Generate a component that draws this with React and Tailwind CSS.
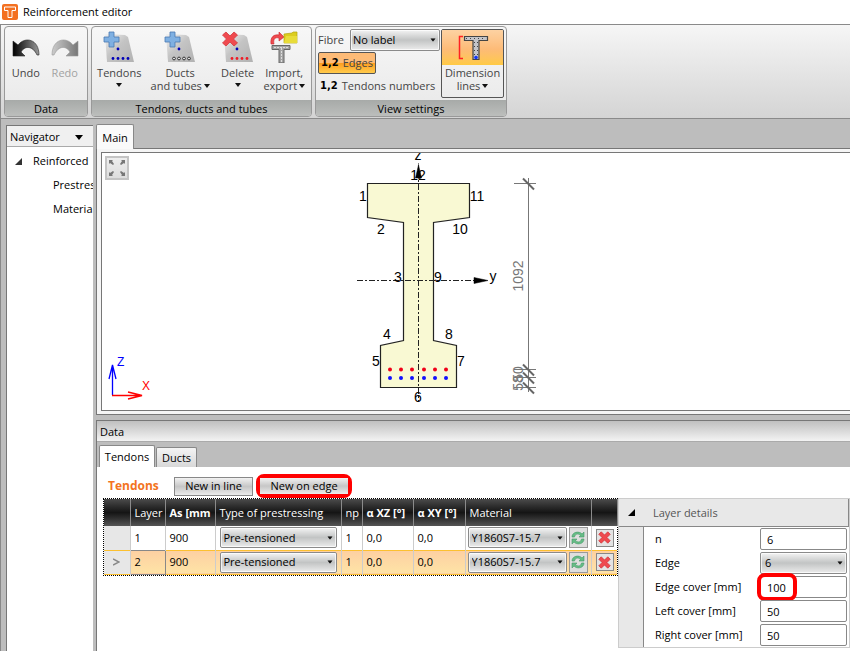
import React, { useState } from 'react';

const tendons = [
    { layer: 1, area: '900', type: 'Pre-tensioned', np: '1', xz: '0,0', xy: '0,0', material: 'Y1860S7-15.7' },
    { layer: 2, area: '900', type: 'Pre-tensioned', np: '1', xz: '0,0', xy: '0,0', material: 'Y1860S7-15.7' },
];

const edgeLabels = [
    { text: '12', x: 418, y: 180 },
    { text: '1', x: 363, y: 201 },
    { text: '11', x: 477, y: 201 },
    { text: '2', x: 381, y: 234 },
    { text: '10', x: 460, y: 234 },
    { text: '3', x: 398, y: 282 },
    { text: '9', x: 438, y: 282 },
    { text: '4', x: 387, y: 339 },
    { text: '8', x: 449, y: 339 },
    { text: '5', x: 376, y: 366 },
    { text: '7', x: 461, y: 366 },
    { text: '6', x: 418, y: 402 },
];

const strandX = [390, 401, 412, 424, 435, 446];

const Caret = ({ className = '' }) => (
    <svg className={className} width="6" height="4" viewBox="0 0 6 4" aria-hidden="true">
        <path d="M0 0h6L3 4z" fill="#111" />
    </svg>
);

const Select = ({ label, id, options, className = '', padding = 'px-1' }) => (
    <div className={`relative ${className}`}>
        <select
            id={id}
            aria-label={label}
            className={`block h-full w-full appearance-none rounded-xs border border-[#8a8a8a] bg-linear-to-b from-[#f4f4f4] from-0% via-[#c2c4c4] via-50% to-[#ececec] text-black outline-1 -outline-offset-2 outline-white/70 ${padding}`}
        >
            {options.map(option => <option key={option}>{option}</option>)}
        </select>
        <Caret className="pointer-events-none absolute right-1 top-1/2 -mt-0.5 scale-90" />
    </div>
);

const UndoIcon = ({ redo }) => (
    <svg width="28" height="32" viewBox="0 0 28 32" className={redo ? '-scale-x-100' : ''} aria-hidden="true">
        <defs>
            <linearGradient id={redo ? 'redo' : 'undo'} x1="0" x2="1">
                <stop offset="0" stopColor={redo ? '#777' : '#000'} />
                <stop offset="1" stopColor={redo ? '#ccc' : '#999'} />
            </linearGradient>
        </defs>
        <path
            d="M1 10v15h12l-4-4c4-7 12-6 16 3h2C27 8 13 5 6 14z"
            fill={`url(#${redo ? 'redo' : 'undo'})`}
            stroke={redo ? '#999' : '#222'}
            strokeWidth=".6"
        />
    </svg>
);

const RedCross = ({ size = 16 }) => (
    <svg width={size} height={size} viewBox="0 0 16 16" aria-hidden="true">
        <path
            d="M4 1l4 4 4-4 3 3-4 4 4 4-3 3-4-4-4 4-3-3 4-4-4-4z"
            fill="#ef4a4f"
            stroke="#d4383e"
            strokeWidth="1"
            strokeLinejoin="round"
        />
    </svg>
);

const PlateIcon = ({ kind }) => (
    <svg width="32" height="32" viewBox="0 0 32 32" aria-hidden="true">
        <defs>
            <linearGradient id="plate" x1="0" y1="0" x2="1" y2="1">
                <stop offset="0" stopColor="#f2f2f2" />
                <stop offset=".45" stopColor="#c4c4c4" />
                <stop offset="1" stopColor="#b2b2b2" />
            </linearGradient>
        </defs>
        <path d="M2 3l20 1 3 2 6 25H4z" fill="url(#plate)" />
        <circle cx="15" cy="18" r="1.4" fill="#0000b8" />
        {[10, 15, 20, 25].map(x => (
            <circle
                key={x}
                cx={x}
                cy="27.500"
                r="1.4"
                fill={kind === 'tendon' ? '#0000b8' : kind === 'delete' ? '#ee1c25' : '#eee'}
                stroke={kind === 'duct' ? '#222' : 'none'}
                strokeWidth=".9"
            />
        ))}
        {kind === 'delete' ? (
            <path
                d="M4 1l4 4 4-4 3.500 3-4 4 4 4-3.500 3-4-4-4 4-3.500-3 4-4-4-4z"
                fill="#ef4a4f"
                stroke="#d4383e"
                strokeWidth=".8"
                strokeLinejoin="round"
            />
        ) : (
            <path d="M6 1h5v5h5v5h-5v5H6v-5H1V6h5z" fill="#7fb0e2" stroke="#4a7ab2" strokeWidth=".8" />
        )}
    </svg>
);

const ImportIcon = () => (
    <svg width="28" height="32" viewBox="0 0 28 32" aria-hidden="true">
        <path d="M2 14.500h18v4h-6V32H9V18.500H2z" fill="#a4a4a4" stroke="#666" />
        <path d="M11.500 17v15M4 16.500h14" stroke="#ddd" strokeDasharray="2 1" />
        <path d="M1 13C0 6 4 3 9 4V1l5 5-5 4V7c-4-1-6 1-5 6z" fill="#ef4a4f" stroke="#c9252c" strokeWidth=".6" />
        <path d="M14 3l8-1 1-1h4v11H14z" fill="#dccd20" stroke="#b5a60d" strokeWidth=".7" />
        <path d="M14 12l2-7h11v7z" fill="#e8dc39" />
    </svg>
);

const DimensionIcon = () => (
    <svg width="32" height="26" viewBox="0 0 32 26" aria-hidden="true">
        <path d="M6 1.500H2.500v22H6" fill="none" stroke="#f22" strokeWidth="1.500" />
        <path d="M7.500 1.500h23v4h-8.500v19h-6v-19H7.500z" fill="#c4c4c8" stroke="#444" strokeWidth="1.200" />
        <path d="M9 3.500h20M17.500 7v13M20.500 7v13" stroke="#444" strokeDasharray="1 3" />
        <circle cx="19" cy="22.500" r="1.800" fill="#1237ff" />
    </svg>
);

const RefreshIcon = () => (
    <svg width="14" height="14" viewBox="0 0 14 14" aria-hidden="true">
        <path
            d="M1 6C1 1 8-.5 11 3l2-2v5H8l1.500-1.500C7 2 4 3 3.500 6zM13 8c0 5-7 6.500-10 3l-2 2V8h5L4.500 9.500C7 12 10 11 10.500 8z"
            fill="#66bd86"
            stroke="#48996a"
            strokeWidth=".6"
        />
    </svg>
);

const RibbonGroup = ({ title, className, children }) => (
    <section className={`flex flex-col overflow-hidden rounded-sm border border-[#999] bg-linear-to-b from-[#f7f7f7] to-[#e8e8e8] ${className}`}>
        <div className="flex h-[73px] px-0.5 pt-0.5">{children}</div>
        <h2 className="h-4 bg-linear-to-b from-[#a7aaa8] to-[#bcbebc] text-center leading-[18px] text-black">{title}</h2>
    </section>
);

const RibbonButton = ({ icon, lines, caret, disabled, className }) => (
    <button
        type="button"
        disabled={disabled}
        className={`flex flex-col items-center pt-0.5 leading-[13px] disabled:text-[#a2a2a2] ${className}`}
    >
        {icon}
        <span className="mt-[3px] whitespace-nowrap">{lines[0]}</span>
        {caret && (
            <span className="flex items-center gap-0.5 whitespace-nowrap">
                {lines[1]}
                <Caret className={lines[1] ? '' : 'mt-1'} />
            </span>
        )}
    </button>
);

const Ribbon = () => (
    <div className="flex h-[95px] shrink-0 gap-[3px] overflow-hidden border-y border-l border-[#8a8a8a] bg-linear-to-b from-[#f6f6f6] to-[#d4d4d4] px-[3px] py-px text-[#444]">
        <RibbonGroup title="Data" className="w-[84px]">
            <RibbonButton icon={<UndoIcon />} lines={['Undo']} className="w-[39px]" />
            <RibbonButton icon={<UndoIcon redo />} lines={['Redo']} className="w-[42px]" disabled />
        </RibbonGroup>
        <RibbonGroup title="Tendons, ducts and tubes" className="w-[221px]">
            <RibbonButton icon={<PlateIcon kind="tendon" />} lines={['Tendons']} className="w-[51px]" caret />
            <RibbonButton icon={<PlateIcon kind="duct" />} lines={['Ducts', 'and tubes']} className="w-[72px]" caret />
            <RibbonButton icon={<PlateIcon kind="delete" />} lines={['Delete']} className="w-[44px]" caret />
            <RibbonButton icon={<ImportIcon />} lines={['Import,', 'export']} className="w-[50px]" caret />
        </RibbonGroup>
        <RibbonGroup title="View settings" className="w-[192px]">
            <div className="flex w-[122px] flex-col items-start">
                <div className="flex h-[22px] w-full items-center justify-between">
                    <label htmlFor="fibre">Fibre</label>
                    <Select id="fibre" options={['No label']} className="h-[22px] w-[90px]" padding="pl-0.5" />
                </div>
                <button
                    type="button"
                    aria-pressed="true"
                    className="mt-px flex h-[22px] items-center gap-1 rounded-xs border border-[#555] bg-linear-to-b from-[#fdbb77] from-50% via-[#ff9c1c] via-50% to-[#ffcb4b] px-0.5"
                >
                    <b className="font-['DejaVu_Sans'] text-[10px] text-black">1,2</b>
                    Edges
                </button>
                <button type="button" className="flex h-[23px] items-center gap-1 whitespace-nowrap px-0.5">
                    <b className="font-['DejaVu_Sans'] text-[10px] text-black">1,2</b>
                    Tendons numbers
                </button>
            </div>
            <button
                type="button"
                aria-pressed="true"
                className="ml-auto flex h-[69px] w-[63px] flex-col items-center overflow-hidden rounded-xs border border-[#555] leading-[13px]"
            >
                <span className="flex h-[35px] w-full items-center justify-center bg-linear-to-b from-[#fdd2a2] from-0% via-[#fdbb77] via-55% to-[#ffca43]">
                    <DimensionIcon />
                </span>
                <span className="mt-px">Dimension</span>
                <span className="flex items-center gap-0.5">lines<Caret /></span>
            </button>
        </RibbonGroup>
    </div>
);

const Navigator = () => (
    <nav className="mt-1.5 flex w-[87px] shrink-0 flex-col overflow-hidden border-l border-t border-[#777] bg-white">
        <button type="button" className="flex h-[21px] shrink-0 items-center justify-between border-b border-[#aaa] bg-[#f0f0f0] pl-[3px] pr-2.5 pt-0.5">
            Navigator
            <svg width="8" height="5" viewBox="0 0 8 5" aria-hidden="true"><path d="M0 0h8L4 5z" /></svg>
        </button>
        <ul className="whitespace-nowrap pt-0.5 leading-6">
            <li>
                <span className="flex items-center gap-[11px] pl-2">
                    <svg width="7" height="7" viewBox="0 0 7 7" aria-hidden="true"><path d="M7 0v7H0z" fill="#333" /></svg>
                    Reinforced
                </span>
                <ul className="pl-[46px]">
                    <li>Prestressing</li>
                    <li>Materials</li>
                </ul>
            </li>
        </ul>
    </nav>
);

const DimensionTick = ({ y }) => (
    <g stroke="#777">
        <path d={`M514 ${y}h22`} />
        <path d={`M523 ${y - 5}l11 11`} stroke="#666" strokeWidth="2" />
    </g>
);

// Girder cross-section with its edges, strands, axes and dimension chain
const SectionDrawing = () => (
    <svg className="block h-[257px] w-full font-['Liberation_Sans'] text-sm" role="img" aria-label="Cross-section">
        <g transform="translate(-102 -153)">
            <path
                d="M367.500 183.500h102v34l-36 5v118l23 5v42h-76v-42l23-5v-118l-36-5z"
                fill="#f9f9d3"
                stroke="#222"
                strokeWidth="1.200"
            />
            <g stroke="#222" strokeDasharray="6 2 2 2" fill="none">
                <path d="M418.500 172v229" />
                <path d="M357 280.500h118" />
            </g>
            <path d="M418.500 163v16M418.500 165l3 13h-6zM488 280.500l-14-3v6z" fill="#000" stroke="#000" strokeWidth=".5" />
            {strandX.map(x => (
                <g key={x}>
                    <circle cx={x} cy="369.500" r="2" fill="#f00018" />
                    <circle cx={x} cy="378" r="2" fill="#1010ff" />
                </g>
            ))}
            <g textAnchor="middle">
                <text x="418" y="160">z</text>
                <text x="493" y="281">y</text>
                {edgeLabels.map(label => (
                    <text key={label.text} x={label.x} y={label.y}>{label.text}</text>
                ))}
            </g>
            <path d="M528.500 178v214" stroke="#777" />
            <DimensionTick y={183.5} />
            <DimensionTick y={369.5} />
            <DimensionTick y={377.5} />
            <DimensionTick y={387.5} />
            <g fill="#777" textAnchor="middle">
                <text transform="translate(523 276) rotate(-90)">1092</text>
                <text transform="translate(523 374) rotate(-90)">50</text>
                <text transform="translate(523 383) rotate(-90)">58</text>
            </g>
            <g fill="none" stroke="#00f" strokeWidth="1.300">
                <path d="M112.500 395v-30M109 379l3.500-14 3.500 14" />
            </g>
            <g fill="none" stroke="#f00" strokeWidth="1.300">
                <path d="M112 395.500h30M128 392l14 3.500-14 3.500" />
            </g>
            <text x="117" y="366" fill="#00f" className="text-xs">Z</text>
            <text x="142" y="390" fill="#f00" className="text-xs">X</text>
        </g>
    </svg>
);

const MainView = () => (
    <div className="shrink-0">
        <div role="tablist" className="flex h-6">
            <button type="button" role="tab" aria-selected="true" className="relative z-10 -mb-px w-[38px] rounded-t-xs border border-b-0 border-[#888] bg-[#fafafa] pt-0.5">
                Main
            </button>
        </div>
        <div className="border-y border-l border-[#777] bg-[#f5f5f5] py-[3px] pl-1">
            <div className="relative border-y border-l border-[#777] bg-white">
                <SectionDrawing />
                <button type="button" aria-label="Zoom all" className="absolute left-[3px] top-[3px] flex h-6 w-6 items-center justify-center border-2 border-[#c4c4c4] bg-linear-to-b from-[#eee] to-[#ddd]">
                    <svg width="16" height="16" viewBox="0 0 16 16" aria-hidden="true">
                        <path d="M0 0h4L3 1l2 3-1 1-3-2-1 1zM16 0v4l-1-1-3 2-1-1 2-3-1-1zM0 16v-4l1 1 3-2 1 1-2 3 1 1zM16 16h-4l1-1-2-3 1-1 3 2 1-1z" fill="#777" />
                    </svg>
                </button>
            </div>
        </div>
    </div>
);

const headerCell = 'h-[27px] overflow-hidden whitespace-nowrap border-r border-[#8b8b8b] px-1 text-left font-normal';

const TendonTable = () => {
    const [selected, setSelected] = useState(2);

    return (
        <div className="w-[515px] shrink-0 border border-dotted border-black">
            <table className="w-full table-fixed border-collapse">
                <colgroup>
                    <col className="w-[26px]" />
                    <col className="w-[35px]" />
                    <col className="w-[50px]" />
                    <col className="w-[126px]" />
                    <col className="w-[21px]" />
                    <col className="w-[51px]" />
                    <col className="w-[52px]" />
                    <col className="w-[126px]" />
                    <col className="w-[26px]" />
                </colgroup>
                <thead className="bg-linear-to-b from-[#4c4c4c] from-0% via-[#151515] via-50% to-[#555] text-white">
                    <tr>
                        <th className={headerCell} />
                        <th className={headerCell}>Layer</th>
                        <th className={headerCell}><b>As [mm</b></th>
                        <th className={headerCell}>Type of prestressing</th>
                        <th className={headerCell}>np</th>
                        <th className={headerCell}><b>α XZ [°]</b></th>
                        <th className={headerCell}><b>α XY [°]</b></th>
                        <th className={headerCell}>Material</th>
                        <th className={headerCell} />
                    </tr>
                </thead>
                <tbody>
                    {tendons.map(row => {
                        const active = row.layer === selected;
                        return (
                            <tr
                                key={row.layer}
                                onClick={() => setSelected(row.layer)}
                                className={active ? 'h-6 border-y border-[#fcc030] bg-linear-to-b from-[#fdd0a2] to-[#fee3a6]' : 'h-6'}
                            >
                                <td className="border-r border-[#ccc] bg-[#e7e7e7]">
                                    {active && (
                                        <svg className="mx-auto" width="7" height="8" viewBox="0 0 7 8" aria-hidden="true">
                                            <path d="M0 1l6 3-6 3" fill="none" stroke="#888" strokeWidth="1.500" />
                                        </svg>
                                    )}
                                </td>
                                <td className={active ? 'border border-[#888] px-1' : 'border-r border-[#ccc] px-1'}>{row.layer}</td>
                                <td className="border-r border-[#ccc] px-1">{row.area}</td>
                                <td className="border-r border-[#ccc] px-1">
                                    <Select label="Type of prestressing" options={[row.type]} className="h-[21px]" padding="pl-[3px]" />
                                </td>
                                <td className="border-r border-[#ccc] px-1">{row.np}</td>
                                <td className="border-r border-[#ccc] px-1">{row.xz}</td>
                                <td className="border-r border-[#ccc] px-1">{row.xy}</td>
                                <td className="border-r border-[#ccc] pl-0.5">
                                    <div className="flex gap-0.5">
                                        <Select label="Material" options={[row.material]} className="h-[21px] w-[99px]" padding="pl-[3px]" />
                                        <button type="button" aria-label="Change material" className="flex h-[21px] w-[19px] items-center justify-center border border-[#999] bg-[#dedede]">
                                            <RefreshIcon />
                                        </button>
                                    </div>
                                </td>
                                <td className="px-1">
                                    <button type="button" aria-label="Delete layer" className="flex h-[18px] w-[18px] items-center justify-center border border-[#888] bg-[#e4e4e4]">
                                        <RedCross size={13} />
                                    </button>
                                </td>
                            </tr>
                        );
                    })}
                </tbody>
            </table>
        </div>
    );
};

const details = [
    { id: 'count', label: 'n', value: '6' },
    { id: 'edge', label: 'Edge', value: '6', select: true },
    { id: 'edge-cover', label: 'Edge cover [mm]', value: '100', marked: true },
    { id: 'left-cover', label: 'Left cover [mm]', value: '50' },
    { id: 'right-cover', label: 'Right cover [mm]', value: '50' },
];

const LayerDetails = () => (
    <section className="min-w-0 flex-1 self-start border border-[#ccc] bg-[#e8e8e8]">
        <h3 className="flex h-7 items-center gap-[18px] border-b border-r border-[#888] pl-[9px] text-[#555]">
            <svg width="7" height="7" viewBox="0 0 7 7" aria-hidden="true"><path d="M7 0v7H0z" fill="#000" /></svg>
            Layer details
        </h3>
        <div className="ml-6 border-l border-[#888] bg-white">
            {details.map(row => (
                <div key={row.id} className="flex h-6 items-center justify-between pl-[11px] pr-0.5">
                    <label htmlFor={row.id} className="whitespace-nowrap">{row.label}</label>
                    <div className="relative">
                        {row.select
                            ? <Select id={row.id} options={[row.value]} className="h-[22px] w-[87px]" />
                            : <input id={row.id} defaultValue={row.value} className="block h-[22px] w-[87px] rounded-xs border border-[#888] px-1.5" />}
                        {row.marked && <span className="pointer-events-none absolute -left-[3px] -top-[3px] h-7 w-10 rounded-lg border-4 border-[#f00]" />}
                    </div>
                </div>
            ))}
        </div>
    </section>
);

const plainButton = 'bg-linear-to-b from-[#f2f2f2] from-0% via-[#c6c6c6] via-50% to-[#ececec] whitespace-nowrap';

const DataPanel = () => (
    <section className="mt-[5px] flex flex-1 flex-col border-l border-t border-[#777]">
        <h2 className="h-[21px] shrink-0 border-b border-[#aaa] bg-linear-to-b from-[#c0c0c0] to-[#f3f3f3] pl-[3px] leading-[22px]">Data</h2>
        <div role="tablist" className="flex h-[25px] shrink-0 items-end gap-px pl-0.5">
            <button type="button" role="tab" aria-selected="true" className="h-[22px] w-14 rounded-t-xs border border-b-0 border-[#888] bg-white pt-px">Tendons</button>
            <button type="button" role="tab" aria-selected="false" className="h-[20px] w-[41px] rounded-t-xs border border-b-0 border-[#888] bg-linear-to-b from-[#f4f4f4] to-[#d8d8d8]">Ducts</button>
        </div>
        <div className="flex-1 bg-white pl-1.5 pt-[7px]">
            <div className="flex h-6 items-center pl-[5px]">
                <h3 className="w-[66px] text-xs font-bold text-[#f37321]">Tendons</h3>
                <button type="button" className={`h-[19px] w-[79px] border border-[#888] ${plainButton}`}>New in line</button>
                <span className="ml-[3px] flex h-6 w-24 items-center rounded-lg border-4 border-[#f00]">
                    <button type="button" className={`h-4 w-full ${plainButton}`}>New on edge</button>
                </span>
            </div>
            <div className="flex items-start">
                <TendonTable />
                <LayerDetails />
            </div>
        </div>
    </section>
);

const App = () => (
    <div className="flex min-h-screen flex-col overflow-hidden bg-[#bdbdbd] font-['Open_Sans',sans-serif] text-[11px]/4 text-black">
        <header className="flex h-6 shrink-0 items-center gap-[5px] bg-white pl-0.5">
            <svg width="16" height="16" viewBox="0 0 16 16" aria-hidden="true">
                <rect width="16" height="16" rx="2" fill="#f37021" />
                <path d="M2.500 3h11v3.500H10V13.500H6v-7H2.500z" fill="#f37021" stroke="#fff" />
            </svg>
            <h1>Reinforcement editor</h1>
        </header>
        <Ribbon />
        <div className="flex flex-1 gap-[3px] border-l border-[#888] pl-[5px]">
            <Navigator />
            <main className="flex min-w-0 flex-1 flex-col pt-[5px]">
                <MainView />
                <DataPanel />
            </main>
        </div>
    </div>
);

export default App;
